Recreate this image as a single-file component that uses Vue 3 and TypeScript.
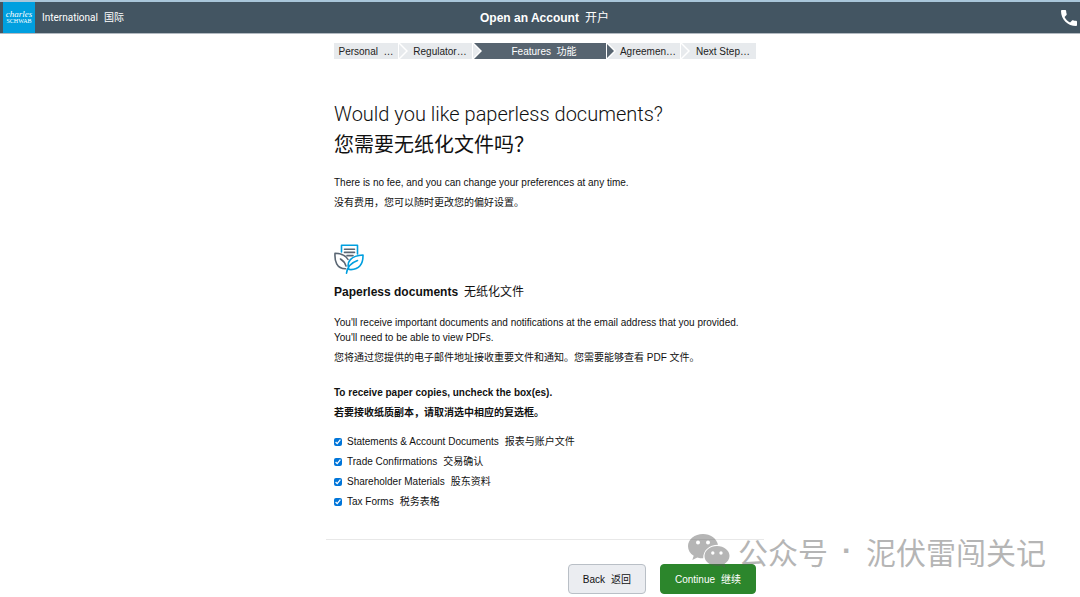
<script setup lang="ts">
import { reactive } from 'vue'

interface Step {
  label: string
  active?: boolean
}

interface Choice {
  id: string
  en: string
  zh: string
  checked: boolean
}

const steps: Step[] = [
  { label: 'Personal  …' },
  { label: 'Regulator…' },
  { label: 'Features  功能', active: true },
  { label: 'Agreemen…' },
  { label: 'Next Step…' },
]

const choices = reactive<Choice[]>([
  { id: 'statements', en: 'Statements & Account Documents', zh: '报表与账户文件', checked: true },
  { id: 'trades', en: 'Trade Confirmations', zh: '交易确认', checked: true },
  { id: 'materials', en: 'Shareholder Materials', zh: '股东资料', checked: true },
  { id: 'tax', en: 'Tax Forms', zh: '税务表格', checked: true },
])
</script>

<template>
  <div class="page">
    <header class="topbar">
      <div class="brand">
        <a href="#" class="logo" aria-label="Charles Schwab">
          <span class="logo-script">charles</span>
          <span class="logo-caps">SCHWAB</span>
        </a>
        <span class="region">International<span class="zh">国际</span></span>
      </div>
      <h1 class="title">Open an Account<span class="zh">开户</span></h1>
      <a href="#" class="phone" aria-label="Call us">
        <svg viewBox="0 0 18 18" width="16" height="16">
          <path d="M1 0h3.800c.6 0 1 .4 1 1 0 1.200.2 2.400.6 3.500.1.400 0 .8-.2 1.100L4 7.800c1.400 2.800 3.400 4.800 6.200 6.200l2.200-2.200c.3-.3.7-.4 1.100-.2 1.100.4 2.300.6 3.500.6.600 0 1 .4 1 1V17c0 .6-.4 1-1 1C7.600 18 0 10.400 0 1c0-.6.4-1 1-1z" fill="#fff" />
        </svg>
      </a>
    </header>

    <main class="content">
      <ol class="steps">
        <li
          v-for="(step, i) in steps"
          :key="step.label"
          class="step"
          :class="{ active: step.active, 'before-active': steps[i + 1]?.active }"
        >
          <span class="step-label">{{ step.label }}</span>
          <svg v-if="i < steps.length - 1" class="sep" viewBox="0 0 10 16" width="10" height="16">
            <path class="gap" d="M0 0H2L10 8L2 16H0z" />
            <path class="tip" d="M1 1L8 8L1 15z" />
          </svg>
        </li>
      </ol>

      <h2 class="heading">
        <span class="heading-en">Would you like paperless documents?</span>
        <span class="heading-zh">您需要无纸化文件吗？</span>
      </h2>
      <p class="text">There is no fee, and you can change your preferences at any time.</p>
      <p class="text zh-line">没有费用，您可以随时更改您的偏好设置。</p>

      <svg class="leaf" viewBox="0 0 30 30" width="30" height="30" fill="none" stroke-width="1.6" stroke-linejoin="round" stroke-linecap="round">
        <path d="M7.500 8V1.200H23.500V10" stroke="#009fdf" />
        <path d="M10.500 5.200H20.500M10.500 8.400H20.500M13 11.600H19" stroke="#5a6673" />
        <path d="M14 15.500C12 11.500 7.500 9.500 1 9.200C.5 17 2.500 24.500 11.500 24.800M6.500 15C9 16.500 11 19 12 22" stroke="#5a6673" />
        <path d="M29 11C29.200 19.500 25.500 26.500 15 25.500C12 18 17 11.500 29 11zM23.500 16.500C18 18.500 13 22.500 12.500 29.200" stroke="#009fdf" />
      </svg>
      <h3 class="subheading">Paperless documents<span class="zh">无纸化文件</span></h3>
      <p class="text">You'll receive important documents and notifications at the email address that you provided. You'll need to be able to view PDFs.</p>
      <p class="text zh-line">您将通过您提供的电子邮件地址接收重要文件和通知。您需要能够查看 PDF 文件。</p>

      <p class="text strong">To receive paper copies, uncheck the box(es).</p>
      <p class="text zh-line bold">若要接收纸质副本，请取消选中相应的复选框。</p>

      <ul class="choices">
        <li v-for="choice in choices" :key="choice.id" class="choice">
          <input :id="choice.id" v-model="choice.checked" type="checkbox" />
          <label :for="choice.id">{{ choice.en }}<span class="zh">{{ choice.zh }}</span></label>
        </li>
      </ul>

      <footer class="actions">
        <button type="button" class="btn back">Back<span class="zh">返回</span></button>
        <button type="button" class="btn continue">Continue<span class="zh">继续</span></button>
      </footer>
    </main>

    <div class="watermark">
      <svg viewBox="0 0 42 34" width="42" height="34">
        <path fill-rule="evenodd" d="M15 0C6.700 0 0 5.400 0 12.200c0 3.900 2.200 7.300 5.700 9.500L4.300 26l5-2.600c1.800.6 3.700.9 5.900.9C15 16.500 21 11 30 10.800C28.600 4.500 22.500 0 15 0zM10 6.600a2 2 0 1 1 0 4a2 2 0 0 1 0-4zM20 6.600a2 2 0 1 1 0 4a2 2 0 0 1 0-4z" />
        <path fill-rule="evenodd" d="M29 12C22 12 16.500 16.500 16.500 22S22 32 29 32c1.600 0 3-.2 4.400-.6L37.400 34l-1-4C39.500 28 41.500 25.200 41.500 22C41.500 16.500 36 12 29 12zM24.800 17.300a1.700 1.700 0 1 1 0 3.400a1.700 1.700 0 0 1 0-3.400zM33 17.300a1.700 1.700 0 1 1 0 3.400a1.700 1.700 0 0 1 0-3.400z" />
      </svg>
      <span>公众号</span>
      <span class="wm-dot">·</span>
      <span>泥伏雷闯关记</span>
    </div>
  </div>
</template>

<style>
body {
  margin: 0;
  background: #fff;
}
</style>

<style scoped>
.page {
  position: relative;
  font-family: "Liberation Sans", "Noto Sans CJK SC", sans-serif;
  font-size: 10px;
  line-height: 15px;
  color: #111;
}

.zh {
  margin-left: 6px;
  font-weight: 400;
}

.topbar {
  display: grid;
  grid-template-columns: 1fr auto 1fr;
  align-items: center;
  height: 31px;
  padding: 0 3px;
  border-top: 2px solid #a9c6da;
  border-bottom: 1px solid #b3bac1;
  background: #435562;
  color: #fff;
}

.brand {
  display: flex;
  align-items: center;
  gap: 7px;
}

.logo {
  display: flex;
  flex-direction: column;
  align-items: center;
  justify-content: center;
  width: 32px;
  height: 31px;
  background: #009fdf;
  color: #fff;
  font-family: "Liberation Serif", serif;
  text-decoration: none;
}

.logo-script {
  font-size: 9px;
  line-height: 7px;
  font-style: italic;
}

.logo-caps {
  font-size: 6px;
  line-height: 7px;
}

.region {
  font-family: Roboto, "Noto Sans CJK SC", sans-serif;
}

.title,
.subheading {
  font-size: 12px;
  font-weight: 700;
  line-height: 18px;
}

.title {
  margin: 0 0 0 9px;
}

.phone {
  display: flex;
  justify-self: end;
}

.content {
  width: 422px;
  margin: 0 auto;
  padding: 9px 0 0 10px;
}

.steps {
  display: flex;
  margin: 0;
  padding: 0;
  list-style: none;
}

.step {
  display: flex;
  flex: 0 0 auto;
  height: 16px;
  color: #222;
}

.step-label {
  width: 64px;
  background: #e7eaed;
  line-height: 17px;
  text-align: center;
  white-space: pre;
}

.step:last-child .step-label {
  width: 66px;
}

.step.active {
  flex: 1;
  color: #fff;
}

.active .step-label {
  flex: 1;
  background: #576470;
}

.sep {
  background: #e7eaed;
}

.gap {
  fill: #fff;
}

.tip {
  fill: #e7eaed;
}

.active .tip {
  fill: #576470;
}

.before-active .sep {
  background: #576470;
}

.heading {
  display: flex;
  flex-direction: column;
  margin: 41px 0 17px;
  font-family: Roboto, "Noto Sans CJK SC", sans-serif;
  font-size: 20px;
  line-height: 29px;
}

.heading-en {
  font-weight: 300;
}

.heading-zh {
  font-family: "Noto Sans CJK SC", sans-serif;
  font-weight: 400;
}

.text {
  margin: 0;
}

.zh-line {
  margin-top: 5px;
}

.leaf {
  display: block;
  margin: 34px 0 9px;
}

.subheading {
  margin: 0 0 14px;
}

.strong {
  margin-top: 20px;
  font-weight: 700;
}

.bold {
  font-weight: 700;
}

.choices {
  display: grid;
  gap: 5px;
  margin: 14px 0 0;
  padding: 0;
  list-style: none;
}

.choice {
  display: flex;
  align-items: center;
  gap: 5px;
}

.choice input {
  width: 8px;
  height: 8px;
  margin: 0;
  accent-color: #0075d9;
}

.actions {
  display: flex;
  justify-content: flex-end;
  gap: 14px;
  margin: 30px -8px 0;
  padding: 24px 8px 3px;
  border-top: 1px solid #e8e8e8;
}

.btn {
  box-sizing: border-box;
  height: 30px;
  padding: 0 14px;
  border: 1px solid #b9bfc6;
  border-radius: 4px;
  font-family: inherit;
  font-size: 10px;
  line-height: 15px;
}

.back {
  background: #ebedf1;
  color: #111;
}

.continue {
  border-color: #2c862c;
  background: #2c862c;
  color: #fff;
}

.watermark {
  position: absolute;
  right: 34px;
  bottom: 28px;
  display: flex;
  align-items: center;
  gap: 8px;
  color: #5c5c5c;
  font-family: "Noto Sans CJK SC", sans-serif;
  font-size: 30px;
  line-height: 36px;
  opacity: 0.45;
  pointer-events: none;
}

.wm-dot {
  width: 22px;
  font-family: "Liberation Sans", sans-serif;
  font-weight: 700;
  text-align: center;
}

.watermark svg {
  fill: currentColor;
}
</style>
